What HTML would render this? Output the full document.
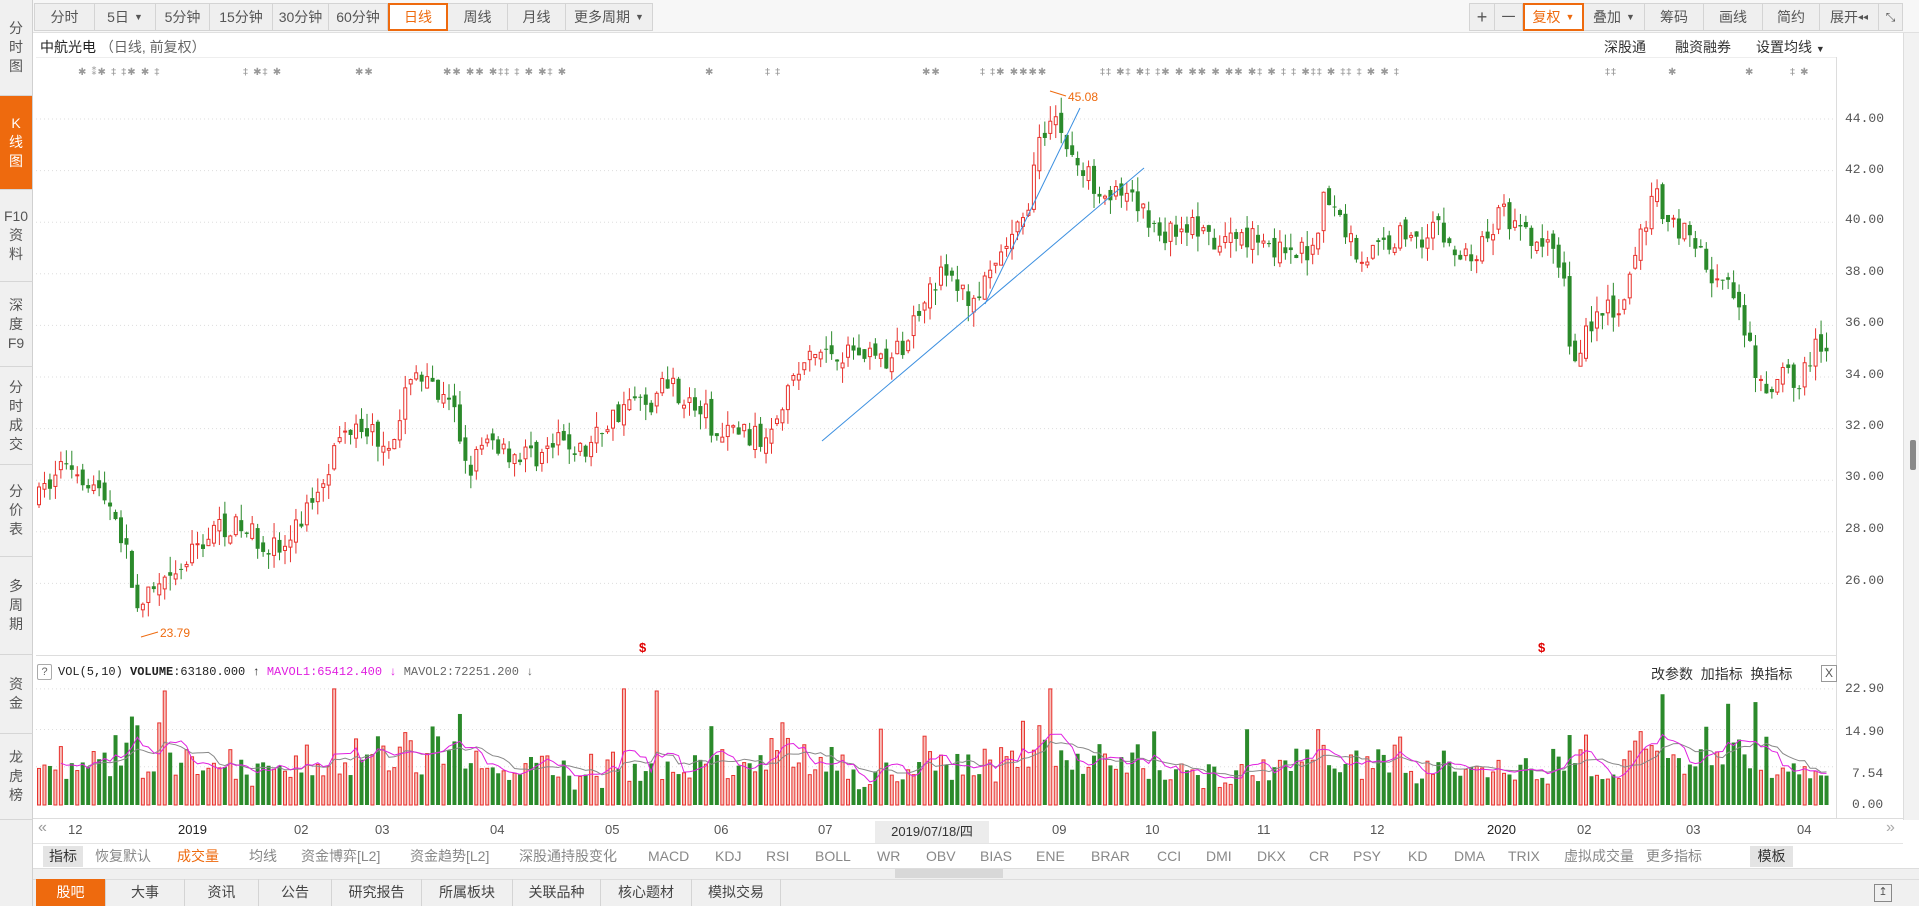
<!DOCTYPE html>
<html><head><meta charset="utf-8">
<style>
*{margin:0;padding:0;box-sizing:border-box}
body{width:1919px;height:906px;overflow:hidden;background:#fff;font-family:"Liberation Sans","Noto Sans CJK SC",sans-serif;font-size:14px;color:#333;position:relative}
.a{position:absolute;white-space:nowrap}
.side{position:absolute;left:0;width:33px;background:#f0f0f0;border-bottom:1px solid #d6d6d6;border-right:1px solid #d0d0d0;color:#555;font-size:14px;display:flex;flex-direction:column;align-items:center;justify-content:center;line-height:19px;text-align:center}
.side.on{background:#ee6a0e;color:#fff}
.tb{position:absolute;top:3px;height:28px;background:#efefef;border:1px solid #d4d4d4;border-left:none;color:#555;font-size:14px;display:flex;align-items:center;justify-content:center}
.tb.on{background:#fff;border:2px solid #ee6a0e;color:#ee6a0e}
.ind{position:absolute;top:846px;height:21px;line-height:21px;font-size:14px;color:#888}
.bt{position:absolute;top:879px;height:27px;line-height:27px;text-align:center;font-size:14px;color:#444;border-right:1px solid #d4d4d4}
.pl{position:absolute;left:1845px;font-family:"Liberation Mono",monospace;font-size:13px;color:#555}
.dl{position:absolute;top:822px;font-size:13px;color:#555;font-family:"Liberation Sans",sans-serif}
</style></head><body>
<!-- sidebar -->
<div class="side" style="top:0;height:96px">分<br>时<br>图</div>
<div class="side on" style="top:96px;height:94px">K<br>线<br>图</div>
<div class="side" style="top:190px;height:92px">F10<br>资<br>料</div>
<div class="side" style="top:282px;height:85px">深<br>度<br>F9</div>
<div class="side" style="top:367px;height:98px">分<br>时<br>成<br>交</div>
<div class="side" style="top:465px;height:92px">分<br>价<br>表</div>
<div class="side" style="top:557px;height:98px">多<br>周<br>期</div>
<div class="side" style="top:655px;height:79px">资<br>金</div>
<div class="side" style="top:734px;height:86px">龙<br>虎<br>榜</div>
<div class="side" style="top:820px;height:86px;border-bottom:none"></div>
<!-- toolbar background -->
<div class="a" style="left:33px;top:0;width:1886px;height:33px;background:#f7f7f7;border-bottom:1px solid #e0e0e0"></div>
<div class="tb" style="left:34px;width:61px;border-left:1px solid #d4d4d4">分时</div>
<div class="tb" style="left:95px;width:61px">5日 <span style="font-size:9px;margin-left:5px">▼</span></div>
<div class="tb" style="left:156px;width:54px">5分钟</div>
<div class="tb" style="left:210px;width:63px">15分钟</div>
<div class="tb" style="left:273px;width:56px">30分钟</div>
<div class="tb" style="left:329px;width:59px">60分钟</div>
<div class="tb on" style="left:388px;width:60px">日线</div>
<div class="tb" style="left:448px;width:60px">周线</div>
<div class="tb" style="left:508px;width:58px">月线</div>
<div class="tb" style="left:566px;width:87px">更多周期 <span style="font-size:9px;margin-left:5px">▼</span></div>
<div class="tb" style="left:1469px;width:26px;border-left:1px solid #d4d4d4;font-size:18px">+</div>
<div class="tb" style="left:1495px;width:28px">一</div>
<div class="tb on" style="left:1523px;width:61px">复权 <span style="font-size:9px;margin-left:5px">▼</span></div>
<div class="tb" style="left:1584px;width:61px">叠加 <span style="font-size:9px;margin-left:5px">▼</span></div>
<div class="tb" style="left:1645px;width:59px">筹码</div>
<div class="tb" style="left:1704px;width:59px">画线</div>
<div class="tb" style="left:1763px;width:57px">简约</div>
<div class="tb" style="left:1820px;width:59px">展开<span style="font-size:10px">◂◂</span></div>
<div class="tb" style="left:1879px;width:24px;font-size:12px">⤡</div>
<!-- right scrollbar -->
<div class="a" style="left:1903px;top:33px;width:16px;height:787px;background:#f2f2f2;border-left:1px solid #ddd"></div>
<div class="a" style="left:1910px;top:440px;width:6px;height:30px;background:#888;border-radius:2px"></div>
<!-- title row -->
<div class="a" style="left:40px;top:37px;font-size:14px;color:#222">中航光电 <span style="color:#666">（日线, 前复权）</span></div>
<div class="a" style="left:1604px;top:37px;font-size:14px;color:#333">深股通</div>
<div class="a" style="left:1675px;top:37px;font-size:14px;color:#333">融资融券</div>
<div class="a" style="left:1756px;top:37px;font-size:14px;color:#333">设置均线 <span style="font-size:9px">▼</span></div>
<div class="a" style="left:36px;top:57px;width:1800px;border-top:1px solid #eee"></div>
<!-- axis separator -->
<div class="a" style="left:1836px;top:57px;height:763px;border-left:1px solid #ddd"></div>
<!-- price labels -->
<div class="pl" style="top:111px">44.00</div><div class="pl" style="top:162px">42.00</div>
<div class="pl" style="top:212px">40.00</div><div class="pl" style="top:264px">38.00</div>
<div class="pl" style="top:315px">36.00</div><div class="pl" style="top:367px">34.00</div>
<div class="pl" style="top:418px">32.00</div><div class="pl" style="top:469px">30.00</div>
<div class="pl" style="top:521px">28.00</div><div class="pl" style="top:573px">26.00</div>
<div class="pl" style="top:681px">22.90</div><div class="pl" style="top:724px">14.90</div>
<div class="pl" style="top:766px;left:1852px">7.54</div><div class="pl" style="top:797px;left:1852px">0.00</div>
<!-- volume header -->
<div class="a" style="left:36px;top:655px;width:1800px;border-top:1px solid #ddd"></div>
<div class="a" style="left:37px;top:664px;width:15px;height:16px;border:1px solid #aaa;border-radius:2px;font-size:11px;text-align:center;line-height:14px;color:#666">?</div>
<div class="a" style="left:58px;top:665px;font-family:'Liberation Mono',monospace;font-size:12px;color:#222">VOL(5,10) <b>VOLUME</b>:63180.000 ↑ <span style="color:#e020e0">MAVOL1:65412.400 ↓</span> <span style="color:#666">MAVOL2:72251.200 ↓</span></div>
<div class="a" style="left:1651px;top:664px;font-size:14px;color:#333">改参数 &nbsp;加指标 &nbsp;换指标</div>
<div class="a" style="left:1821px;top:665px;width:16px;height:17px;border:1px solid #999;font-size:12px;text-align:center;line-height:15px;color:#555">X</div>
<svg id="ch" class="a" style="left:0;top:0" width="1919" height="906"></svg>
<!-- date axis -->
<div class="a" style="left:33px;top:818px;width:1870px;height:26px;border-top:1px solid #ddd;border-bottom:1px solid #e4e4e4;background:#fff"></div>
<div class="dl" style="left:38px;color:#999;font-size:16px;top:819px">«</div>
<div class="dl" style="left:68px">12</div><div class="dl" style="left:178px;color:#222">2019</div>
<div class="dl" style="left:294px">02</div><div class="dl" style="left:375px">03</div>
<div class="dl" style="left:490px">04</div><div class="dl" style="left:605px">05</div>
<div class="dl" style="left:714px">06</div><div class="dl" style="left:818px">07</div>
<div class="a" style="left:875px;top:821px;width:114px;height:22px;background:#ececec;font-size:13px;line-height:22px;text-align:center;color:#333">2019/07/18/四</div>
<div class="dl" style="left:1052px">09</div><div class="dl" style="left:1145px">10</div>
<div class="dl" style="left:1257px">11</div><div class="dl" style="left:1370px">12</div>
<div class="dl" style="left:1487px;color:#222">2020</div><div class="dl" style="left:1577px">02</div>
<div class="dl" style="left:1686px">03</div><div class="dl" style="left:1797px">04</div>
<div class="dl" style="left:1886px;color:#aaa;font-size:16px;top:819px">»</div>
<!-- indicators -->
<div class="a" style="left:33px;top:845px;width:1886px;height:23px;background:#fff"></div>
<div class="ind" style="left:43px;width:40px;background:#e4e4e4;color:#333;text-align:center">指标</div>
<div class="ind" style="left:95px">恢复默认</div>
<div class="ind" style="left:177px;color:#ee6a0e">成交量</div>
<div class="ind" style="left:249px">均线</div>
<div class="ind" style="left:301px">资金博弈[L2]</div>
<div class="ind" style="left:410px">资金趋势[L2]</div>
<div class="ind" style="left:519px">深股通持股变化</div>
<div class="ind" style="left:648px">MACD</div><div class="ind" style="left:715px">KDJ</div>
<div class="ind" style="left:766px">RSI</div><div class="ind" style="left:815px">BOLL</div>
<div class="ind" style="left:877px">WR</div><div class="ind" style="left:926px">OBV</div>
<div class="ind" style="left:980px">BIAS</div><div class="ind" style="left:1036px">ENE</div>
<div class="ind" style="left:1091px">BRAR</div><div class="ind" style="left:1157px">CCI</div>
<div class="ind" style="left:1206px">DMI</div><div class="ind" style="left:1257px">DKX</div>
<div class="ind" style="left:1309px">CR</div><div class="ind" style="left:1353px">PSY</div>
<div class="ind" style="left:1408px">KD</div><div class="ind" style="left:1454px">DMA</div>
<div class="ind" style="left:1508px">TRIX</div><div class="ind" style="left:1564px">虚拟成交量</div>
<div class="ind" style="left:1646px">更多指标</div>
<div class="ind" style="left:1750px;width:43px;background:#e4e4e4;color:#333;text-align:center">模板</div>
<!-- scrollbar row -->
<div class="a" style="left:33px;top:868px;width:1886px;height:11px;background:#f0f0f0;border-top:1px solid #ddd"></div>
<div class="a" style="left:895px;top:869px;width:108px;height:9px;background:#d8d8d8"></div>
<!-- bottom tabs -->
<div class="a" style="left:33px;top:879px;width:1886px;height:27px;background:#f0f0f0;border-top:1px solid #ddd"></div>
<div class="bt" style="left:36px;width:70px;background:#ee6a0e;color:#fff">股吧</div>
<div class="bt" style="left:106px;width:79px">大事</div>
<div class="bt" style="left:185px;width:74px">资讯</div>
<div class="bt" style="left:259px;width:73px">公告</div>
<div class="bt" style="left:332px;width:90px">研究报告</div>
<div class="bt" style="left:422px;width:91px">所属板块</div>
<div class="bt" style="left:513px;width:88px">关联品种</div>
<div class="bt" style="left:601px;width:91px">核心题材</div>
<div class="bt" style="left:692px;width:89px">模拟交易</div>
<div class="a" style="left:1874px;top:884px;width:18px;height:18px;border:1px solid #888;font-size:11px;text-align:center;line-height:14px;color:#555">↥</div>
<script>
(function(){
var s=document.getElementById('ch'),h=[];
function P(p){return 119+(44-p)*25.8}
function V(v){return 805-v*5.07}
// grid
[44,42,40,38,36,34,32,30,28,26].forEach(function(p){h.push('<line x1="36" x2="1836" y1="'+P(p)+'" y2="'+P(p)+'" stroke="#ddd" stroke-dasharray="1,3"/>')});
[22.9,14.9,7.54].forEach(function(v){h.push('<line x1="36" x2="1836" y1="'+V(v)+'" y2="'+V(v)+'" stroke="#ddd" stroke-dasharray="1,3"/>')});
var k=[[30,29.3],[52,30.8],[65,30.3],[90,29.0],[100,27.5],[113,24.5],[120,25.5],[140,26],[160,27.5],[180,28.3],[200,28],[230,27.2],[245,28.5],[260,30],[275,31.5],[290,32.5],[310,31.5],[325,32],[335,34.5],[350,33.5],[370,32.5],[380,30.5],[400,31.5],[420,31],[440,31],[460,31.5],[475,31],[490,32],[510,33],[530,33],[545,34],[560,33],[575,32.5],[585,31.5],[600,32],[620,31.5],[635,33],[655,34.5],[670,35],[690,35],[710,35],[725,34.5],[740,35.5],[755,37.5],[770,38],[790,37],[805,37.5],[820,39],[835,40],[845,42.5],[858,44.5],[865,43.5],[880,42],[895,41.5],[910,41],[930,40.5],[950,39.5],[970,40],[990,39],[1010,39.5],[1030,39.5],[1050,38.5],[1070,39],[1080,41],[1095,40],[1110,38.5],[1125,39],[1140,39.5],[1160,39.5],[1170,40],[1190,38.5],[1210,39],[1225,40.5],[1240,39.5],[1260,39],[1275,38.5],[1282,34.5],[1295,36],[1310,36.5],[1325,36.5],[1335,39],[1350,41],[1365,40],[1380,39.5],[1395,38],[1410,37.5],[1425,35.5],[1440,33],[1455,34],[1470,34],[1485,35.3],[1495,34.5]];
k=k.map(function(a){return [a[0]*1.224,a[1]]});
function T(x){for(var i=1;i<k.length;i++){if(x<=k[i][0]){var a=k[i-1],b=k[i];return a[1]+(b[1]-a[1])*(x-a[0])/(b[0]-a[0]);}}return k[k.length-1][1]}
var seed=7;function r(){seed=(seed*16807)%2147483647;return seed/2147483647}
var n=328,dx=(1830-37)/n,prev=29.3,vols=[],xs=[];
for(var i=0;i<n;i++){var x=37+i*dx;xs.push(x);var t=T(x);var o=prev+(r()-.5)*0.5;var c=t+(r()-.5)*1.0;
var hi=Math.max(o,c)+r()*0.6,lo=Math.min(o,c)-r()*0.6;var up=c>=o;
var col=up?'#e8322d':'#2b8a2b';
h.push('<line x1="'+(x+2)+'" x2="'+(x+2)+'" y1="'+P(hi)+'" y2="'+P(lo)+'" stroke="'+col+'"/>');
var y1=P(Math.max(o,c)),hh=Math.max(1,P(Math.min(o,c))-y1);
h.push(up?'<rect x="'+(x+.5)+'" y="'+y1+'" width="3" height="'+hh+'" fill="#fff" stroke="'+col+'"/>':'<rect x="'+x+'" y="'+y1+'" width="4" height="'+hh+'" fill="'+col+'"/>');
var base=4+Math.abs(t-prev)*6+Math.sin(i/9)*1.5+2;var v=base*(0.6+r()*0.8);if(r()<0.04)v*=2.2;v=Math.min(22.9,Math.max(1.5,v));vols.push(v);
var vy=V(v);h.push(up?'<rect x="'+(x+.5)+'" y="'+vy+'" width="3" height="'+(805-vy)+'" fill="#f6c0bb" stroke="#e8322d"/>':'<rect x="'+x+'" y="'+vy+'" width="4" height="'+(805-vy)+'" fill="#2b8a2b"/>');
prev=c;}
function ma(m,col){var p='';for(var i=m-1;i<n;i++){var s2=0;for(var j=0;j<m;j++)s2+=vols[i-j];p+=(i==m-1?'M':'L')+(xs[i]+2).toFixed(1)+' '+V(s2/m).toFixed(1);}h.push('<path d="'+p+'" fill="none" stroke="'+col+'" stroke-width="1"/>')}
ma(10,'#888');ma(5,'#e020e0');
// trend lines
h.push('<line x1="822" y1="441" x2="1144" y2="168" stroke="#3b8fe0"/>');
h.push('<line x1="985" y1="304" x2="1080" y2="108" stroke="#3b8fe0"/>');
h.push('<text x="1068" y="101" font-size="12" fill="#ee6a0e" font-family="Liberation Sans">45.08</text><path d="M1066 96 L1050 91" stroke="#ee6a0e"/>');
h.push('<text x="160" y="637" font-size="12" fill="#ee6a0e" font-family="Liberation Sans">23.79</text><path d="M158 632 L141 637" stroke="#ee6a0e"/>');
h.push('<text x="639" y="652" font-size="13" font-weight="bold" fill="#e00000" font-family="Liberation Sans">$</text><text x="1538" y="652" font-size="13" font-weight="bold" fill="#e00000" font-family="Liberation Sans">$</text>');
// star markers
var st=[[78,'✱ ⁑✱ ‡ ‡✱ ✱ ‡'],[243,'‡ ✱‡ ✱'],[355,'✱✱'],[443,'✱✱ ✱✱ ✱‡‡ ‡ ✱ ✱‡ ✱'],[705,'✱'],[765,'‡ ‡'],[922,'✱✱'],[980,'‡ ‡✱ ✱✱✱✱'],[1100,'‡‡ ✱‡ ✱‡ ‡✱ ✱ ✱✱ ✱ ✱✱ ✱‡ ✱ ‡ ‡ ✱‡‡ ✱ ‡‡ ‡ ✱ ✱ ‡'],[1605,'‡‡'],[1668,'✱'],[1745,'✱'],[1790,'‡ ✱']];
st.forEach(function(a){h.push('<text x="'+a[0]+'" y="75" font-size="10" fill="#999" font-family="DejaVu Sans" letter-spacing="1">'+a[1]+'</text>')});
s.innerHTML=h.join('');
})();
</script>
</body></html>
